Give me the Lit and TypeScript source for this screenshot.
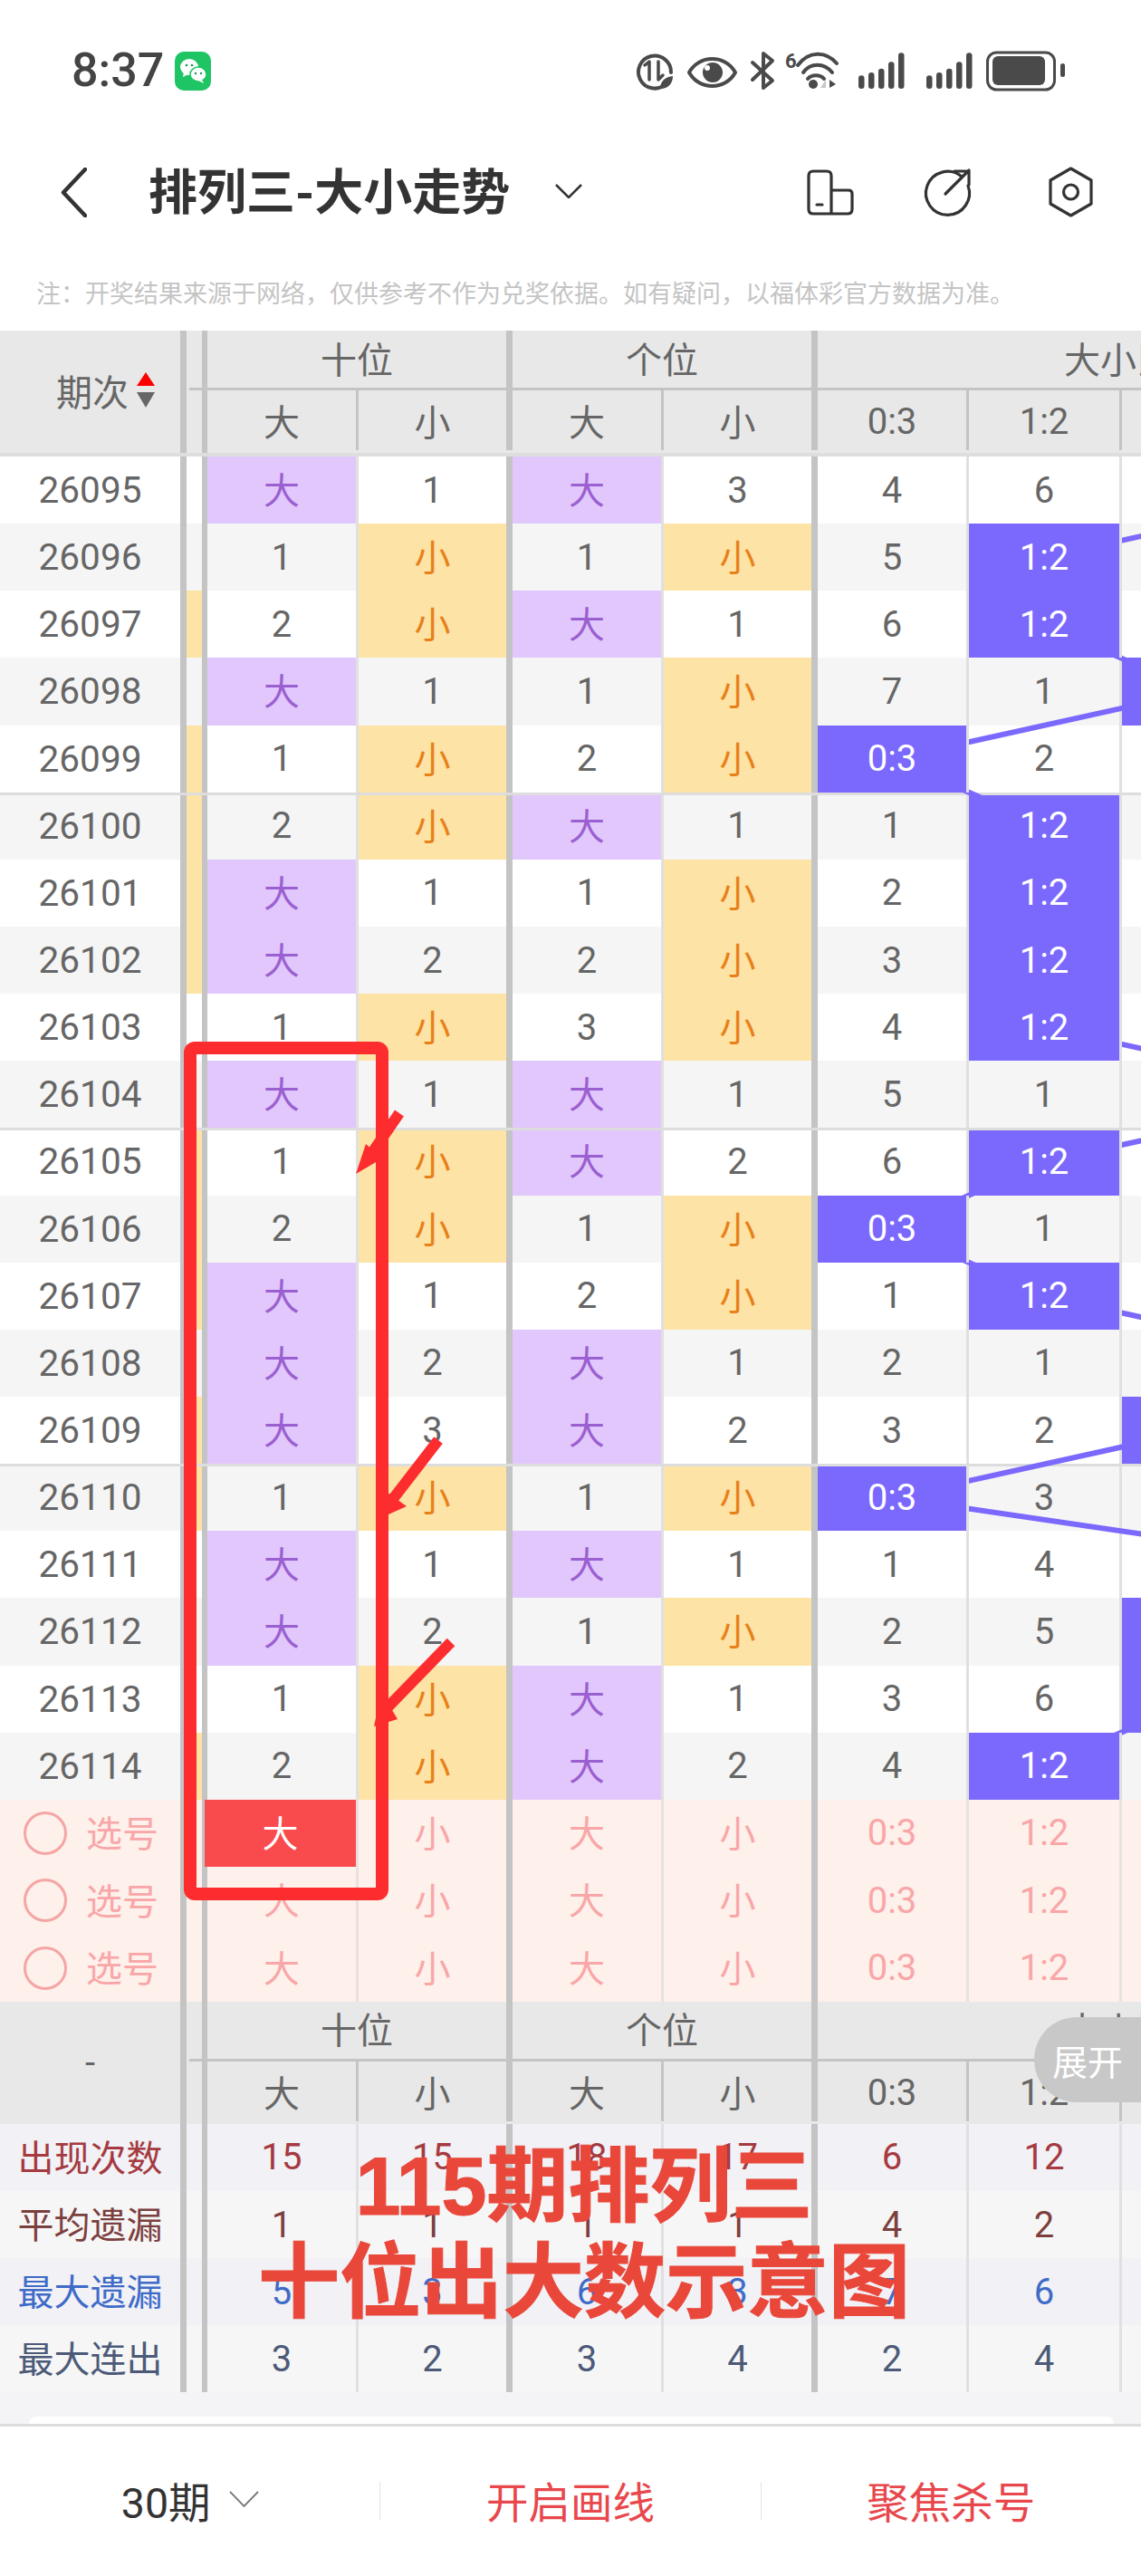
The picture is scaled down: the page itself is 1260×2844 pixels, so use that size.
import { LitElement, html, css, svg } from "lit";
import { customElement } from "lit/decorators.js";

const ROWS: string[][] = [
  ["大","1","大","3","4","6"],["1","小","1","小","5","1:2"],["2","小","大","1","6","1:2"],["大","1","1","小","7","1"],
  ["1","小","2","小","0:3","2"],["2","小","大","1","1","1:2"],["大","1","1","小","2","1:2"],["大","2","2","小","3","1:2"],
  ["1","小","3","小","4","1:2"],["大","1","大","1","5","1"],["1","小","大","2","6","1:2"],["2","小","1","小","0:3","1"],
  ["大","1","2","小","1","1:2"],["大","2","大","1","2","1"],["大","3","大","2","3","2"],["1","小","1","小","0:3","3"],
  ["大","1","大","1","1","4"],["大","2","1","小","2","5"],["1","小","大","1","3","6"],["2","小","大","2","4","1:2"],
];
const GUTTER = new Set([2, 4, 5, 6, 7, 10, 11, 12, 14, 15, 19]);
const GHIT = new Set([3, 14, 17, 18]);
const PATH = "HFFGEFFFFHFEFHGEHGGF";
const XS: Record<string, number> = { E: 986, F: 1154, G: 1322, H: 1492 };
const ROW_H = 74.15;
const STATS = [
  { cls: "s1", label: "出现次数", vals: ["15", "15", "18", "17", "6", "12"] },
  { cls: "s2", label: "平均遗漏", vals: ["1", "1", "1", "1", "4", "2"] },
  { cls: "s3", label: "最大遗漏", vals: ["5", "3", "6", "3", "7", "6"] },
  { cls: "s4", label: "最大连出", vals: ["3", "2", "3", "4", "2", "4"] },
];
const SELECT = ["大", "小", "大", "小", "0:3", "1:2"];
const isCjk = (v: string) => v === "大" || v === "小";

@customElement("app-root")
export class AppRoot extends LitElement {
  static styles = css`
    :host {
      display: block;
      position: relative;
      width: 1260px;
      height: 2844px;
      overflow: hidden;
      background: #fff;
      color: #666;
      font-family: Roboto, "Noto Sans CJK SC", sans-serif;
      font-size: 40px;
    }
    .status { height: 130px; box-sizing: border-box; padding: 45px 70px 0 79px; display: flex; align-items: flex-start; }
    .time { font-size: 52px; font-weight: 500; line-height: 66px; color: #444; width: 114px; }
    .wechat { margin-top: 12px; }
    .status-icons { margin-left: auto; }
    .nav { height: 164px; box-sizing: border-box; padding-left: 67px; display: flex; align-items: center; position: relative; }
    .title { margin-left: 68px; margin-top: -8px; font-size: 54px; font-weight: 700; color: #333; white-space: nowrap; }
    .caret { margin-left: 50px; margin-top: -2px; }
    .actions { margin-left: auto; margin-right: 45px; }
    .note { height: 71px; padding-left: 40px; font-size: 27px; line-height: 62px; color: #c4c4c4; white-space: nowrap; }

    .grid {
      display: grid;
      grid-template-columns: 206px 23px 167px 170px 167px 170px 167px 169px 170px 170px;
      width: 1379px;
    }
    .c {
      box-sizing: border-box;
      display: flex;
      align-items: center;
      justify-content: center;
      white-space: nowrap;
      border-right: 3px solid #e0e0e0;
      min-width: 0;
    }
    .thick { border-right: 7px solid #c4c4c4; }
    .gut { border-right: 6px solid #c4c4c4; }
    .cjk { padding-bottom: 4px; }

    .head { background: #e8e8e8; grid-template-rows: 66px 69px; }
    .head.top { border-bottom: 4px solid #dedede; }
    .head .p { grid-row: span 2; }
    .head .c { border-right-color: #c4c4c4; }
    .period-head { justify-content: flex-start; padding: 0 0 4px 62px; gap: 9px; }
    .gtop { border-bottom: 3px solid #c4c4c4; margin-left: 3px; }
    .group { grid-column: span 2; border-bottom: 3px solid #c4c4c4; padding-bottom: 4px; }
    .group.wide { grid-column: span 4; padding-right: 12px; border-right: 0; }
    .sub { height: 66px; }
    .sub.num { padding-top: 3px; }

    .body { position: relative; }
    .row { height: 74.15px; background: #fff; box-sizing: border-box; }
    .row.alt { background: #f5f5f5; }
    .row.sep { border-top: 3px solid #ddd; }
    .row.sep .c { padding-bottom: 3px; }
    .row.sep .c.cjk { padding-bottom: 7px; }
    .yellow { background: #fde3a5; }
    .da { background: #e1c7fc; color: #9a5fd0; position: relative; z-index: 2; }
    .xiao { background: #fde3a5; color: #e8801a; position: relative; z-index: 2; }
    .hit { background: #7b68fd; color: #fff; position: relative; z-index: 2; }
    .period { font-size: 40.5px; }
    .lines { position: absolute; left: 0; top: 0; z-index: 1; }

    .pick { height: 74.33px; background: #fef0ea; color: #f9a6a8; }
    .pick .c:not(.thick):not(.gut) { border-right-color: #e6e2e0; }
    .pick-p { justify-content: flex-start; padding-left: 26px; gap: 21px; }
    .pick-t { margin-top: -3px; }
    .ring { width: 48px; height: 48px; box-sizing: border-box; border: 3.5px solid #f5a5a5; border-radius: 50%; }
    .sel { background: #f94a4d; color: #fff; margin-left: -3px; position: relative; }

    .stat { height: 74.17px; background: #f1f1f6; }
    .stat.even { background: #f6f6f6; }
    .s1 { color: #a53a40; }
    .s2 { color: #7c3f3f; }
    .s3 { color: #3f6bc8; }
    .s4 { color: #4c5a78; }

    .tail { height: 34.3px; box-sizing: border-box; padding: 27px 30px 0 32px; background: #f4f4f6; }
    .card { height: 7.3px; background: #fff; border-radius: 16px 16px 0 0; }
    .bar {
      height: 168px;
      box-sizing: border-box;
      border-top: 3px solid #ddd;
      display: flex;
      align-items: center;
      background: #fff;
    }
    .cell { flex: 1; display: flex; align-items: center; justify-content: center; font-size: 46.5px; gap: 20px; padding-bottom: 4px; }
    .cell.red { color: #e8474c; }
    .cell.dark { color: #333; }
    .divider { width: 1px; height: 42px; background: #e2e2e2; }

    .marks { position: absolute; left: 0; top: 0; z-index: 5; pointer-events: none; }
    .caption {
      position: absolute;
      left: 0;
      top: 2361px;
      width: 1290px;
      z-index: 6;
      text-align: center;
      font-family: "Liberation Sans", "Noto Sans CJK SC", sans-serif;
      font-size: 90px;
      font-weight: 700;
      line-height: 106px;
      color: #e9473a;
      -webkit-text-stroke: 1px #e9473a;
      white-space: nowrap;
    }
    .expand {
      position: absolute;
      left: 1142px;
      top: 2227px;
      width: 118px;
      height: 94px;
      box-sizing: border-box;
      padding-left: 20px;
      z-index: 4;
      display: flex;
      align-items: center;
      border-radius: 47px 0 0 47px;
      background: #c8c8c8;
      color: #fff;
      font-size: 39px;
      white-space: nowrap;
    }
  `;

  private statusIcons() {
    const bars = (o: number) =>
      [
        [948, 115], [959, 105], [970, 92], [981, 70], [992, 40],
      ].map(([x, t]) => {
        const top = 45 + t / 3;
        return svg`<rect x=${x + o} y=${top} width="6.5" height=${98 - top} rx="3.2" fill="#4a4a4a"></rect>`;
      });
    return html`<svg class="status-icons" width="500" height="65" viewBox="690 45 500 65">
      <g fill="none" stroke="#4a4a4a" stroke-width="4" stroke-linecap="round" stroke-linejoin="round">
        <path d="M735 93 A18 18 0 1 1 741 80"></path>
        <path d="M712 72 L717 68 V88" stroke-width="3.5"></path>
        <path d="M727 68 V88 L732 83" stroke-width="3.5"></path>
        <path d="M761 80 C772 60 801 60 812 80 C801 100 772 100 761 80Z"></path>
        <path d="M831 69 L853 89 L843 97 V59 L853 67 L831 88"></path>
        <path d="M881 72 C893 56 912 56 924 70"></path>
        <path d="M887 80 C895 69 910 69 919 80"></path>
        <path d="M892 87 C896 82 906 82 910 87"></path>
      </g>
      <path d="M729 98 C729 89 735 85 743 84 C743 92 738 98 729 98Z" fill="#4a4a4a"></path>
      <circle cx="787" cy="80" r="11" fill="#4a4a4a"></circle>
      <circle cx="781" cy="75" r="3" fill="#fff"></circle>
      <circle cx="898" cy="93" r="5" fill="#4a4a4a"></circle>
      <polygon points="906,97 912,88 912,97" fill="#c8c8c8"></polygon>
      <polygon points="916,88 923,93 916,97" fill="#4a4a4a"></polygon>
      <text x="867" y="75" font-size="22" font-weight="700" fill="#4a4a4a" font-family="Roboto">6</text>
      ${bars(0)}${bars(75)}
      <rect x="1090.5" y="58" width="74" height="41" rx="10" fill="none" stroke="#4a4a4a" stroke-width="3"></rect>
      <rect x="1096" y="62" width="58" height="32" rx="6" fill="#4a4a4a"></rect>
      <rect x="1171" y="70" width="5" height="15" rx="2.5" fill="#4a4a4a"></rect>
    </svg>`;
  }

  private wechat() {
    return html`<svg class="wechat" width="40" height="43" viewBox="0 0 40 43">
      <rect width="40" height="43" rx="10" fill="#1fc564"></rect>
      <ellipse cx="16" cy="17" rx="10" ry="9" fill="#fff"></ellipse>
      <path d="M10 23 L9 28 L15 25Z" fill="#fff"></path>
      <ellipse cx="26" cy="25" rx="9" ry="8" stroke="#1fc564" stroke-width="1.5" fill="#fff"></ellipse>
      <path d="M30 31 L32 35 L26 32Z" fill="#fff"></path>
      <circle cx="13" cy="15" r="1.3" fill="#1a9a50"></circle>
      <circle cx="19" cy="15" r="1.3" fill="#1a9a50"></circle>
      <circle cx="23" cy="24" r="1.2" fill="#1a9a50"></circle>
      <circle cx="29" cy="24" r="1.2" fill="#1a9a50"></circle>
    </svg>`;
  }

  private nav() {
    return html`<div class="nav">
      <svg width="29" height="55" viewBox="0 0 29 55">
        <path d="M27 2 L3 27.5 L27 53" fill="none" stroke="#333" stroke-width="4.5" stroke-linecap="round" stroke-linejoin="round"></path>
      </svg>
      <div class="title">排列三-大小走势</div>
      <svg class="caret" width="30" height="16" viewBox="0 0 30 16">
        <path d="M1 1 L15 15 L29 1" fill="none" stroke="#333" stroke-width="2.5"></path>
      </svg>
      <svg class="actions" width="330" height="65" viewBox="885 180 330 65">
        <g fill="none" stroke="#333" stroke-width="3.2" stroke-linecap="round" stroke-linejoin="round">
          <path d="M918 210 V194 Q918 189 913 189 H898 Q893 189 893 194 V231 Q893 236 898 236 H936 Q941 236 941 231 V214 Q941 210 937 210 H918 V236"></path>
          <path d="M902 226 H908"></path>
          <path d="M1062 195 A24 24 0 1 0 1069 205"></path>
          <path d="M1044 214 L1070 188 M1054 189 H1070 V204"></path>
          <path d="M1182.5 186 L1205 199 V225 L1182.5 238 L1160 225 V199 Z"></path>
          <circle cx="1182.5" cy="212" r="8"></circle>
        </g>
      </svg>
    </div>`;
  }

  private tableHead(top: boolean) {
    const subs = ["大", "小", "大", "小", "0:3", "1:2", "2:1"];
    return html`<div class="grid head ${top ? "top" : ""}">
      <div class="c thick p ${top ? "period-head" : ""}">
        ${top
          ? html`<span>期次</span>
              <svg width="20" height="40" viewBox="0 0 20 40">
                <polygon points="10,0 20,15 0,15" fill="#f00"></polygon>
                <polygon points="0,22 20,22 10,39" fill="#666"></polygon>
              </svg>`
          : "-"}
      </div>
      <div class="c gut gtop"></div>
      <div class="c thick group">十位</div>
      <div class="c thick group">个位</div>
      <div class="c group wide">大小比</div>
      <div class="c gut"></div>
      ${subs.map(
        (s, i) => html`<div class="c sub ${i === 1 || i === 3 ? "thick" : ""} ${isCjk(s) ? "" : "num"}">${s}</div>`
      )}
    </div>`;
  }

  private dataRow(r: string[], i: number) {
    const cls = (v: string) =>
      v === "大" ? "da cjk" : v === "小" ? "xiao cjk" : v.includes(":") ? "hit" : "";
    return html`<div class="grid row ${i % 2 ? "alt" : ""} ${i > 0 && i % 5 === 0 ? "sep" : ""}">
      <div class="c thick period">${26095 + i}</div>
      <div class="c gut ${GUTTER.has(i) ? "yellow" : ""}"></div>
      ${r.map((v, k) => html`<div class="c ${k === 1 || k === 3 ? "thick" : ""} ${cls(v)}">${v}</div>`)}
      <div class="c ${GHIT.has(i) ? "hit" : ""}">${GHIT.has(i) ? "2:1" : ""}</div>
    </div>`;
  }

  private chartLines() {
    const pts = [...PATH].map((c, i) => `${XS[c]},${(i + 0.5) * ROW_H}`).join(" ");
    return html`<svg class="lines" width="1260" height="1483" viewBox="0 0 1260 1483">
      <polyline points=${pts} fill="none" stroke="#7b68fd" stroke-width="6"></polyline>
    </svg>`;
  }

  private pickRow(i: number) {
    return html`<div class="grid pick">
      <div class="c thick pick-p"><span class="ring"></span><span class="pick-t">选号</span></div>
      <div class="c gut"></div>
      ${SELECT.map(
        (v, k) => html`<div class="c ${k === 1 || k === 3 ? "thick" : ""} ${i === 0 && k === 0 ? "sel" : ""} ${isCjk(v) ? "cjk" : ""}">${v}</div>`
      )}
      <div class="c"></div>
    </div>`;
  }

  private statRow(s: (typeof STATS)[number], i: number) {
    return html`<div class="grid stat ${i % 2 ? "even" : ""} ${s.cls}">
      <div class="c thick cjk">${s.label}</div>
      <div class="c gut"></div>
      ${s.vals.map((v, k) => html`<div class="c ${k === 1 || k === 3 ? "thick" : ""}">${v}</div>`)}
      <div class="c"></div>
    </div>`;
  }

  render() {
    return html`
      <div class="status">
        <div class="time">8:37</div>
        ${this.wechat()} ${this.statusIcons()}
      </div>
      ${this.nav()}
      <div class="note">注：开奖结果来源于网络，仅供参考不作为兑奖依据。如有疑问，以福体彩官方数据为准。</div>
      ${this.tableHead(true)}
      <div class="body">${ROWS.map((r, i) => this.dataRow(r, i))} ${this.chartLines()}</div>
      ${[0, 1, 2].map((i) => this.pickRow(i))} ${this.tableHead(false)}
      ${STATS.map((s, i) => this.statRow(s, i))}
      <div class="tail"><div class="card"></div></div>
      <div class="bar">
        <div class="cell dark">
          <span>30期</span>
          <svg width="33" height="18" viewBox="0 0 33 18"><path d="M1 1 L16.5 17 L32 1" fill="none" stroke="#777" stroke-width="1.8"></path></svg>
        </div>
        <div class="divider"></div>
        <div class="cell red">开启画线</div>
        <div class="divider"></div>
        <div class="cell red">聚焦杀号</div>
      </div>
      <div class="expand">展开</div>
      <svg class="marks" width="1260" height="2844" viewBox="0 0 1260 2844">
        <rect x="210" y="1157" width="212" height="934" rx="5" fill="none" stroke="#fd2d2f" stroke-width="14"></rect>
        <g fill="none" stroke="#fd2d2f" stroke-width="12">
          <path d="M441 1229 L410 1274"></path>
          <path d="M484 1590 L430 1660"></path>
          <path d="M498 1813 L428 1885"></path>
        </g>
        <g fill="#fd2d2f">
          <polygon points="393,1296 404,1263 422,1279"></polygon>
          <polygon points="420,1676 424,1645 449,1663"></polygon>
          <polygon points="413,1906 421,1868 439,1898"></polygon>
        </g>
      </svg>
      <div class="caption">115期排列三<br />十位出大数示意图</div>
    `;
  }
}
